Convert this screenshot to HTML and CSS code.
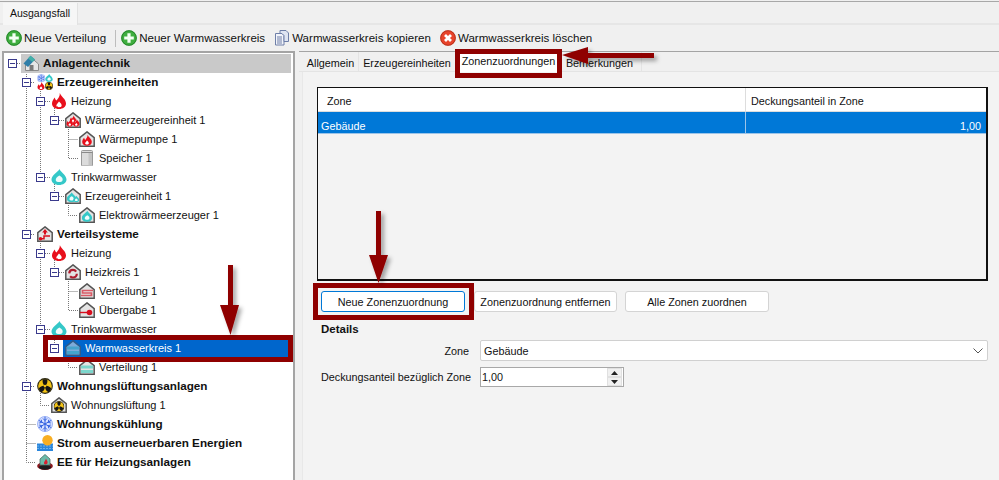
FILE: index.html
```html
<!DOCTYPE html>
<html lang="de">
<head>
<meta charset="utf-8">
<title>Ausgangsfall</title>
<link rel="stylesheet" href="styles.css">
</head>
<body>
<svg class="defs" width="0" height="0">
  <defs>
    <symbol id="flame" viewBox="0 0 16 16"><path d="M8.800 0C10 3.500 15 6 15 10.500C15 13.800 12 16 8 16C4 16 1 13.800 1 10.500C1 8 2.500 6 3.800 4.500C4 6 4.800 7 5.500 7.500C7 5.500 9.200 3 8.800 0Z" fill="#e8101c"/><path d="M8 8.500C9.800 10.300 11 11.500 10.600 13C10.200 14.600 5.800 14.600 5.400 13C5 11.500 6.800 10.500 8 8.500Z" fill="#fff"/></symbol>
    <symbol id="drop" viewBox="0 0 16 16"><path d="M8.500 0C9.500 3 15.500 6 15.500 10.500C15.500 13.800 12 16 8 16C4 16 .5 13.800 .5 10.500C.5 6 7 3 8.500 0Z" fill="#35c8c8"/><path d="M8.500 6.500C11 8 12 9.500 11.500 11.500C11 13.500 5.500 13.800 4.800 11.500C4.300 9.500 6 7.500 8.500 6.500Z" fill="#effcfc"/></symbol>
    <symbol id="house" viewBox="0 0 16 16"><path d="M8 .9L15.200 6.700V15.200H.8V6.700Z" fill="#e4e4e4" stroke="#555" stroke-width="1.500"/></symbol>
    <symbol id="house-flame" viewBox="0 0 16 16"><use href="#house"/><svg x="2.500" y="3.500" width="11" height="11.500"><use href="#flame"/></svg></symbol>
    <symbol id="house-flames" viewBox="0 0 16 16"><use href="#house"/><svg x="1" y="6.500" width="7.500" height="8.500"><use href="#flame"/></svg><svg x="7.500" y="6.500" width="7.500" height="8.500"><use href="#flame"/></svg><svg x="4.500" y="3" width="7" height="8"><use href="#flame"/></svg></symbol>
    <symbol id="house-drop" viewBox="0 0 16 16"><use href="#house"/><svg x="2.500" y="3.500" width="11" height="11.500"><use href="#drop"/></svg></symbol>
    <symbol id="house-drops" viewBox="0 0 16 16"><use href="#house"/><svg x="1.500" y="4" width="10" height="10.500"><use href="#drop"/></svg><svg x="8" y="7.500" width="6.500" height="7"><use href="#drop"/></svg></symbol>
    <symbol id="house-circ" viewBox="0 0 16 16"><use href="#house"/><circle cx="8" cy="9.700" r="3.800" fill="none" stroke="#b01c2e" stroke-width="2.200" stroke-dasharray="9 3"/></symbol>
    <symbol id="house-rad" viewBox="0 0 16 16"><use href="#house"/><path d="M14 7.500H3.500V10H12.500V12.500H2" fill="none" stroke="#d85a66" stroke-width="1.700"/></symbol>
    <symbol id="house-rad-teal" viewBox="0 0 16 16"><use href="#house"/><rect x="2" y="6.500" width="12" height="3" fill="#7cd6cc"/><rect x="2" y="11" width="12" height="3" fill="#7cd6cc"/></symbol>
    <symbol id="house-give" viewBox="0 0 16 16"><use href="#house"/><path d="M1 10.500H10" stroke="#d80f1e" stroke-width="1.400"/><circle cx="10.500" cy="10.500" r="2.800" fill="#d80f1e"/></symbol>
    <symbol id="house-dist" viewBox="0 0 16 16"><use href="#house"/><path d="M8 3L10.800 6.500H9V8.500H7V6.500H5.200Z" fill="#d80f1e"/><path d="M3.500 12.800H7V10H13" fill="none" stroke="#d80f1e" stroke-width="1.500"/><circle cx="3.500" cy="12.800" r="1.800" fill="#d80f1e"/></symbol>
    <symbol id="fan" viewBox="0 0 16 16"><circle cx="8" cy="8" r="7.900" fill="#2a2610"/><circle cx="8" cy="8" r="6.800" fill="#f3c316"/><path d="M8 8C6 6.500 5.200 4 5.700 1.500C7 1 9 1 10.300 1.500C10.800 4 10 6.500 8 8ZM8 8C10.500 7.500 12.500 8.500 14.200 10.300C14 11.800 13 13.300 11.600 14.200C9.200 13.300 8 11 8 8ZM8 8C8 11 6.800 13.300 4.400 14.200C3 13.300 2 11.800 1.800 10.300C3.500 8.500 5.500 7.500 8 8Z" fill="#151515"/><circle cx="8" cy="8" r="1.300" fill="#f3c316"/></symbol>
    <symbol id="house-fan" viewBox="0 0 16 16"><use href="#house"/><svg x="2.500" y="4" width="11" height="11"><use href="#fan"/></svg></symbol>
    <symbol id="snow" viewBox="0 0 16 16"><circle cx="8" cy="8" r="7.700" fill="#d9e2ff"/><circle cx="8" cy="8" r="7.500" fill="none" stroke="#6f8ff0" stroke-width=".6"/><g stroke="#2f5fe0" stroke-width="1" fill="none"><path d="M8 .8V15.200M1.800 4.400L14.200 11.600M14.200 4.400L1.800 11.600"/><path d="M6 2.500L8 4.500L10 2.500M6 13.500L8 11.500L10 13.500M2.200 7L4.800 6.300L4.200 3.700M13.800 9L11.200 9.700L11.800 12.300M13.800 7L11.200 6.300L11.800 3.700M2.200 9L4.800 9.700L4.200 12.300"/></g></symbol>
    <symbol id="multi" viewBox="0 0 16 16"><svg x="0" y="0" width="8.500" height="8.500"><use href="#snow"/></svg><svg x="8" y="0" width="8" height="8"><use href="#drop"/></svg><svg x="0" y="8" width="8" height="8"><use href="#flame"/></svg><svg x="8" y="8" width="8" height="8"><use href="#fan"/></svg></symbol>
    <symbol id="sun" viewBox="0 0 16 16"><rect x="0" y="8.500" width="16" height="7.500" fill="#2a86dc"/><path d="M0 11H16M0 13.500H16" stroke="#8cc4f0" stroke-width=".7" stroke-dasharray="2 1"/><circle cx="10.500" cy="5.200" r="5.200" fill="#f8ae22"/></symbol>
    <symbol id="ee" viewBox="0 0 16 16"><ellipse cx="8" cy="12" rx="7.900" ry="4" fill="#8c1a20"/><ellipse cx="8" cy="13.300" rx="6" ry="2.500" fill="#1c1c1c"/><path d="M8 .5L13 5V11H3V5Z" fill="#6cbcaa" stroke="#4c6e64" stroke-width=".8"/><path d="M9 4.500C9.500 6.500 11 7 10.500 9C10 10.800 7.500 10.800 7 9.500C6.700 8 8.500 6.500 9 4.500Z" fill="#d82030"/></symbol>
    <symbol id="root" viewBox="0 0 16 16"><path d="M8.500 3L15.500 9V15.500H2.500V9Z" fill="#e6e6e6" stroke="#8a8a8a"/><path d="M.5 8.500L7.500 .8L12 4.500L5 12Z" fill="#2f7ea8"/><path d="M7.500 .8L12 4.500L9.500 7L5 3.500Z" fill="#43b0a8"/><rect x="6.500" y="10" width="4" height="5.500" fill="#7a7a7a"/></symbol>
    <symbol id="cyl" viewBox="0 0 16 16"><rect x="2.500" y=".5" width="11" height="15.500" rx="1" fill="#dcdcdc" stroke="#9a9a9a"/><path d="M2.500 2.500H13.500" stroke="#8a8a8a"/><rect x="9.500" y="3" width="3.500" height="12.500" fill="#c4c4c4"/></symbol>
    <symbol id="add" viewBox="0 0 16 16"><circle cx="8" cy="8" r="7.800" fill="#3fae3f"/><circle cx="8" cy="8" r="7.300" fill="none" stroke="#1d7a24" stroke-width=".8"/><path d="M8 3.200V12.800M3.200 8H12.800" stroke="#f4fff4" stroke-width="3.200"/></symbol>
    <symbol id="del" viewBox="0 0 16 16"><circle cx="8" cy="8" r="7.800" fill="#e8432a"/><circle cx="8" cy="8" r="7.300" fill="none" stroke="#a92c18" stroke-width=".8"/><path d="M5 5L11 11M11 5L5 11" stroke="#fff" stroke-width="2.800"/></symbol>
    <symbol id="copy" viewBox="0 0 16 16"><path d="M1.500 3.500H8L10 5.500V15H1.500Z" fill="#f2f4fa" stroke="#6e7fa8"/><path d="M6 .5H12L14.500 3V11.500H10V5.500L8 3.500H6Z" fill="#dfe5f2" stroke="#6e7fa8"/><path d="M3 7H8M3 9H8M3 11H8M3 13H8" stroke="#6e7fa8"/></symbol>
  </defs>
</svg>
<div class="app">
  <div class="tabstrip"><div class="doc-tab">Ausgangsfall</div></div>
  <div class="toolbar">
    <span class="tool"><svg class="ico16"><use href="#add"/></svg>Neue Verteilung</span>
    <span class="tool-sep"></span>
    <span class="tool"><svg class="ico16"><use href="#add"/></svg>Neuer Warmwasserkreis</span>
    <span class="tool"><svg class="ico16"><use href="#copy"/></svg>Warmwasserkreis kopieren</span>
    <span class="tool"><svg class="ico16"><use href="#del"/></svg>Warmwasserkreis löschen</span>
  </div>
  <div class="main">
    <div class="tree">
      <svg class="tree-lines" width="999" height="480">
        <path d="M26.500 68V462.500H36M26.500 424.500H36M26.500 443.500H36M40.500 87V177.500M40.500 239V329.500M40.500 391V405.500H50M54.500 106V120.500M54.500 182V196.500M54.500 258V272.500M54.500 334V348.500M68.500 125V158.500H78M68.500 139.500H78M68.500 201V215.500H78M68.500 277V310.500H78M68.500 291.500H78M68.500 353V367.500H78M17 63.500H21M31 82.500H35M31 234.500H35M31 386.500H35M45 101.500H50M45 177.500H50M45 253.500H50M45 329.500H50M59 120.500H64M59 196.500H64M59 272.500H64" fill="none" stroke="#777" stroke-dasharray="1 1"/>
      </svg>
      <div class="row l0"><span class="exp"></span><span class="node current"><svg class="ico"><use href="#root"/></svg><b>Anlagentechnik</b></span></div>
      <div class="row l1"><span class="exp"></span><span class="node"><svg class="ico"><use href="#multi"/></svg><b>Erzeugereinheiten</b></span></div>
      <div class="row l2"><span class="exp"></span><span class="node"><svg class="ico"><use href="#flame"/></svg>Heizung</span></div>
      <div class="row l3"><span class="exp"></span><span class="node"><svg class="ico"><use href="#house-flames"/></svg>Wärmeerzeugereinheit 1</span></div>
      <div class="row l4"><span class="exp none"></span><span class="node"><svg class="ico"><use href="#house-flame"/></svg>Wärmepumpe 1</span></div>
      <div class="row l4"><span class="exp none"></span><span class="node"><svg class="ico"><use href="#cyl"/></svg>Speicher 1</span></div>
      <div class="row l2"><span class="exp"></span><span class="node"><svg class="ico"><use href="#drop"/></svg>Trinkwarmwasser</span></div>
      <div class="row l3"><span class="exp"></span><span class="node"><svg class="ico"><use href="#house-drops"/></svg>Erzeugereinheit 1</span></div>
      <div class="row l4"><span class="exp none"></span><span class="node"><svg class="ico"><use href="#house-drop"/></svg>Elektrowärmeerzeuger 1</span></div>
      <div class="row l1"><span class="exp"></span><span class="node"><svg class="ico"><use href="#house-dist"/></svg><b>Verteilsysteme</b></span></div>
      <div class="row l2"><span class="exp"></span><span class="node"><svg class="ico"><use href="#flame"/></svg>Heizung</span></div>
      <div class="row l3"><span class="exp"></span><span class="node"><svg class="ico"><use href="#house-circ"/></svg>Heizkreis 1</span></div>
      <div class="row l4"><span class="exp none"></span><span class="node"><svg class="ico"><use href="#house-rad"/></svg>Verteilung 1</span></div>
      <div class="row l4"><span class="exp none"></span><span class="node"><svg class="ico"><use href="#house-give"/></svg>Übergabe 1</span></div>
      <div class="row l2"><span class="exp"></span><span class="node"><svg class="ico"><use href="#drop"/></svg>Trinkwarmwasser</span></div>
      <div class="row l3"><span class="exp"></span><span class="node selected"><svg class="ico dim"><use href="#house-rad-teal"/></svg>Warmwasserkreis 1</span></div>
      <div class="row l4"><span class="exp none"></span><span class="node"><svg class="ico"><use href="#house-rad-teal"/></svg>Verteilung 1</span></div>
      <div class="row l1"><span class="exp"></span><span class="node"><svg class="ico"><use href="#fan"/></svg><b>Wohnungslüftungsanlagen</b></span></div>
      <div class="row l2"><span class="exp none"></span><span class="node"><svg class="ico"><use href="#house-fan"/></svg>Wohnungslüftung 1</span></div>
      <div class="row l1"><span class="exp none"></span><span class="node"><svg class="ico"><use href="#snow"/></svg><b>Wohnungskühlung</b></span></div>
      <div class="row l1"><span class="exp none"></span><span class="node"><svg class="ico"><use href="#sun"/></svg><b>Strom auserneuerbaren Energien</b></span></div>
      <div class="row l1"><span class="exp none"></span><span class="node"><svg class="ico"><use href="#ee"/></svg><b>EE für Heizungsanlagen</b></span></div>
    </div>
    <div class="detail">
      <div class="tabs">
        <span class="tab t1">Allgemein</span>
        <span class="tab t2">Erzeugereinheiten</span>
        <span class="tab active">Zonenzuordnungen</span>
        <span class="tab t4">Bemerkungen</span>
      </div>
      <div class="page">
        <div class="grid">
          <div class="grid-head"><span class="c1">Zone</span><span class="c2">Deckungsanteil in Zone</span></div>
          <div class="grid-row"><span class="c1">Gebäude</span><span class="c2">1,00</span></div>
        </div>
        <div class="actions">
          <button class="btn focus">Neue Zonenzuordnung</button>
          <button class="btn second">Zonenzuordnung entfernen</button>
          <button class="btn third">Alle Zonen zuordnen</button>
        </div>
        <div class="details-title">Details</div>
        <div class="form">
          <label class="lbl lbl-zone">Zone</label>
          <div class="combo"><span>Gebäude</span><svg class="chev" width="10" height="6" viewBox="0 0 10 6"><path d="M.5 .5L5 5L9.500 .5" fill="none" stroke="#555"/></svg></div>
          <label class="lbl">Deckungsanteil bezüglich Zone</label>
          <div class="spin"><span>1,00</span>
            <div class="spin-btns">
              <span class="spin-b"><svg width="7" height="4" viewBox="0 0 7 4"><path d="M3.500 0L7 4H0Z" fill="#222"/></svg></span>
              <span class="spin-b"><svg width="7" height="4" viewBox="0 0 7 4"><path d="M3.500 4L7 0H0Z" fill="#222"/></svg></span>
            </div>
          </div>
        </div>
      </div>
    </div>
  </div>
</div>
<svg class="marks" width="999" height="480" viewBox="0 0 999 480">
  <defs><filter id="sh" x="-30%" y="-30%" width="170%" height="170%"><feDropShadow dx="3" dy="3" stdDeviation="2" flood-color="#000" flood-opacity=".35"/></filter></defs>
  <g fill="none" stroke="#8f0000" stroke-width="5">
    <rect x="457.500" y="51.500" width="102" height="24"/>
    <rect x="315.500" y="285.500" width="156" height="32"/>
    <rect x="45.500" y="337.500" width="245" height="22"/>
  </g>
  <g fill="#8f0000" filter="url(#sh)">
    <path d="M562 55L588 47V53H654V58H588V64Z"/>
    <path d="M376 211H381V255H388L378.500 283L369 255H376Z"/>
    <path d="M228 265H233V305H239L230.500 335L220 305H228Z"/>
  </g>
</svg>
</body>
</html>
```
FILE: styles.css
```css
* { box-sizing: border-box; }
html, body { margin: 0; padding: 0; height: 480px; overflow: hidden; }
body {
  position: relative;
  background: #f0f0f0;
  font-family: "Liberation Sans", Arial, sans-serif;
  font-size: 10.8px;
  color: #111;
}
.defs { position: absolute; }
.app { width: 999px; height: 480px; display: flex; flex-direction: column; }

.tabstrip {
  height: 24px;
  margin-top: 1px;
  border-top: 1px solid #a8a8a8;
  border-bottom: 2px solid #e6e6e6;
  padding-left: 3px;
  flex: none;
}
.doc-tab {
  width: 75px;
  height: 22px;
  background: #f6f6f6;
  border-right: 1px solid #e2e2e2;
  text-align: center;
  line-height: 21px;
  margin-top: 1px;
  font-size: 10.5px;
}
.toolbar {
  height: 26px;
  flex: none;
  display: flex;
  align-items: center;
  padding-left: 6px;
  font-size: 11.55px;
}
.tool { display: flex; align-items: center; gap: 2px; white-space: nowrap; margin-right: 9px; }
.tool-sep { width: 1px; height: 17px; background: #bdbdbd; margin-right: 5px; }
.ico16 { width: 16px; height: 16px; flex: none; }

.main { flex: 1; display: flex; min-height: 0; }
.tree {
  position: relative;
  width: 293px;
  margin-left: 2px;
  background: #fff;
  border: 2px solid #a4a4a4;
  border-bottom: 0;
  padding-top: 1px;
  flex: none;
  font-size: 11px;
}
.tree b { font-size: 11.7px; }
.tree-lines { position: absolute; left: -4px; top: -53px; }
.row { position: relative; height: 19px; display: flex; align-items: center; }
.l0 { padding-left: 4px; }
.l1 { padding-left: 18px; }
.l2 { padding-left: 32px; }
.l3 { padding-left: 46px; }
.l4 { padding-left: 60px; }
.exp {
  width: 9px;
  height: 9px;
  flex: none;
  border: 1px solid #3a3a8c;
  background: linear-gradient(#3a3a8c, #3a3a8c) center / 5px 1px no-repeat #fff;
}
.exp.none { border-color: transparent; background: none; }
.node {
  flex: 1;
  height: 19px;
  margin-left: 4px;
  margin-right: 2px;
  padding-bottom: 2px;
  display: flex;
  align-items: center;
  white-space: nowrap;
}
.ico { width: 16px; height: 16px; flex: none; margin: 0 4px 0 2px; }
.dim { opacity: .55; }
.current { background: #c9c9c9; }
.selected { background: #0066cc; color: #fff; }

.detail { flex: 1; margin-left: 4px; border-top: 1px solid #a4a4a4; display: flex; flex-direction: column; min-width: 0; }
.tabs { height: 20px; display: flex; padding-left: 4px; border-bottom: 1px solid #e4e4e4; flex: none; }
.tab {
  height: 19px;
  line-height: 23px;
  text-align: center;
  border-right: 1px solid #e4e4e4;
  white-space: nowrap;
}
.t1 { width: 56px; }
.t2 { width: 97px; }
.active { width: 98px; margin-left: 4px; background: #fff; height: 20px; line-height: 19px; }
.t4 { width: 84px; }
.page {
  flex: 1;
  margin-left: 3px;
  background: #f3f3f3;
  border-left: 1px solid #e8e8e8;
  padding: 15px 11px 0 14px;
}
.grid { height: 194px; border: 2px solid #111; border-width: 1px 2px 2px 1px; }
.grid-head { height: 24px; background: #fff; border-bottom: 1px solid #ddd; display: flex; align-items: center; }
.grid-row { height: 22px; background: #0078d7; color: #fff; border-bottom: 1px solid #9cc4e8; display: flex; align-items: center; }
.c1 { width: 428px; flex: none; height: 100%; display: flex; align-items: center; border-right: 1px solid #ddd; }
.grid-head .c1 { padding-left: 9px; padding-top: 2px; }
.grid-row .c1 { padding-left: 3px; padding-top: 6px; border-right-color: #9cc4e8; }
.c2 { flex: 1; padding: 0 5px 0 6px; }
.grid-head .c2 { padding-left: 5px; padding-top: 2px; }
.grid-row .c2 { text-align: right; padding-top: 6px; }

.actions { display: flex; margin-top: 10px; padding-left: 4px; height: 22px; }
.btn {
  height: 21px;
  font: inherit;
  color: #111;
  background: #fff;
  border: 1px solid #d4d4d4;
  border-radius: 3px;
  padding: 0;
  white-space: nowrap;
}
.focus { width: 144px; border-color: #0078d7; }
.second { width: 143px; margin-left: 9px; }
.third { width: 144px; margin-left: 8px; }
.details-title { font-weight: 700; font-size: 11.5px; margin: 8px 0 0 4px; height: 16px; line-height: 16px; }
.form {
  display: grid;
  grid-template-columns: 148px 1fr;
  column-gap: 11px;
  row-gap: 6px;
  margin: 3px 0 0 4px;
}
.lbl { text-align: right; white-space: nowrap; align-self: center; }
.combo {
  height: 21px;
  background: #fff;
  border: 1px solid #d0d0d0;
  border-radius: 2px;
  display: flex;
  align-items: center;
  justify-content: space-between;
  padding: 0 4px 0 3px;
}
.spin {
  width: 144px;
  height: 20px;
  background: #fff;
  border: 1px solid #a8a8a8;
  display: flex;
  align-items: center;
  justify-content: space-between;
  padding-left: 1px;
}
.spin-btns { width: 15px; margin-right: 1px; height: 18px; display: flex; flex-direction: column; }
.spin-b { flex: 1; background: #f0f0f0; border: 1px solid #e0e0e0; display: flex; align-items: center; justify-content: center; }

.marks { position: absolute; left: 0; top: 0; pointer-events: none; }
```
